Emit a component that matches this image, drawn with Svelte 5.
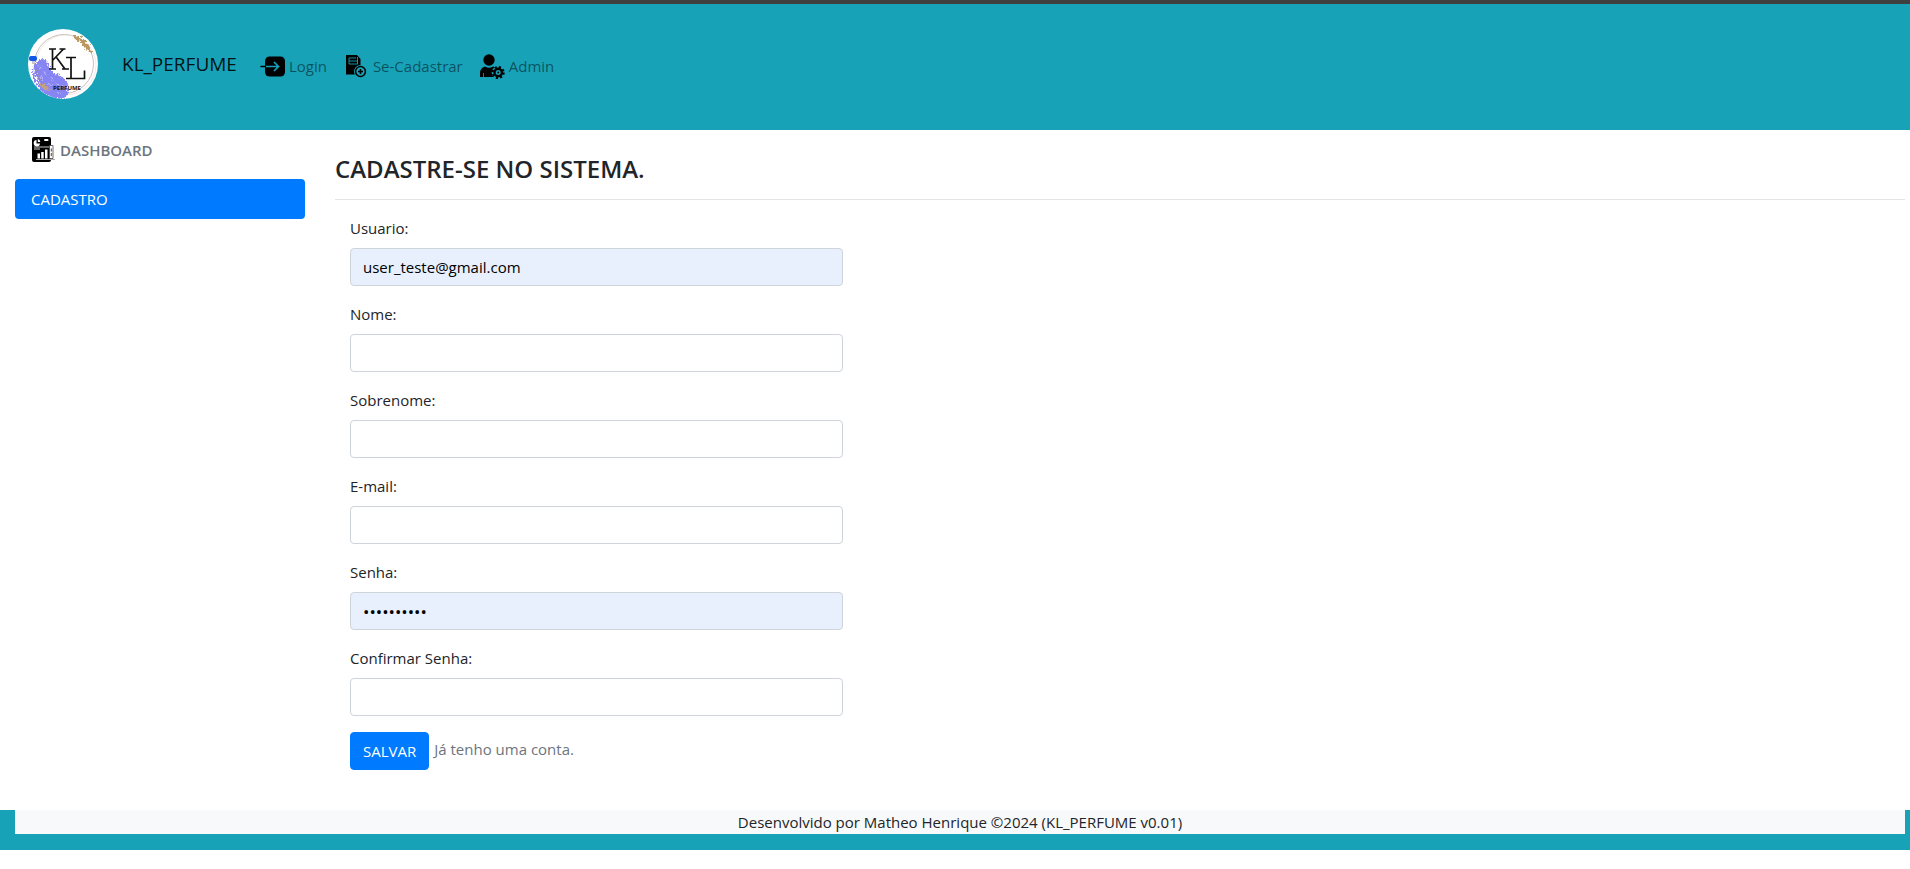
<script>
  let fields = $state([
    { id: 'usuario', label: 'Usuario:', type: 'text', value: 'user_teste@gmail.com', filled: true },
    { id: 'nome', label: 'Nome:', type: 'text', value: '', filled: false },
    { id: 'sobrenome', label: 'Sobrenome:', type: 'text', value: '', filled: false },
    { id: 'email', label: 'E-mail:', type: 'email', value: '', filled: false },
    { id: 'senha', label: 'Senha:', type: 'password', value: '1234567890', filled: true },
    { id: 'confirmar', label: 'Confirmar Senha:', type: 'password', value: '', filled: false }
  ]);
</script>

<div class="page">
  <header>
    <a class="brand" href="#home">
      <svg class="logo" viewBox="0 0 70 70" aria-hidden="true">
        <defs>
          <clipPath id="disc"><circle cx="35" cy="35" r="35" /></clipPath>
          <filter id="rough" x="-20%" y="-20%" width="140%" height="140%">
            <feTurbulence type="fractalNoise" baseFrequency="0.45" numOctaves="3" seed="4" />
            <feDisplacementMap in="SourceGraphic" scale="7" xChannelSelector="R" yChannelSelector="G" />
          </filter>
        </defs>
        <circle cx="35" cy="35" r="35" fill="#fff" />
        <g clip-path="url(#disc)">
          <circle cx="36" cy="35" r="29.500" fill="none" stroke="#c9bdb8" stroke-width="1" />
          <circle cx="38" cy="36" r="30" fill="none" stroke="#e3dcda" stroke-width="0.6" />
          <g filter="url(#rough)">
            <path d="M9 33 Q15 27 20 33 Q21 42 29 46 Q38 48 40 57 Q42 65 35 70 Q24 71 16 64 Q5 56 4 45 Q4 36 9 33Z" fill="#8785f3" />
            <path d="M11 37l3 2M16 42l2 3M22 49l4 2M28 54l3 3M20 55l3 1M12 47l2 3M30 64l3 1M36 56l1 3" stroke="#b5b4fa" stroke-width="1.500" />
            <path d="M5 40l2 4M7 47l2 3M9 52l1 3M4 50l3 5" stroke="#fff" stroke-width="2" />
            <path d="M8 40 Q10 46 12 52" fill="none" stroke="#9b86a4" stroke-width="1.500" stroke-dasharray="2 1" />
            <path d="M12 53 Q18 56 24 61 L20 62 Q15 60 11 56Z" fill="#c1a083" />
            <path d="M46 6 Q59 8 64 24 Q58 22 55 16 Q51 12 46 9Z" fill="#bd9760" />
          </g>
          <rect x="1" y="27" width="8" height="5" rx="2" fill="#1556e6" />
          <path d="M5 32v3" stroke="#8b87b8" stroke-width="1" />
        </g>
        <g fill="none" stroke="#111" stroke-width="1.7">
          <path d="M21 20h7M21 40h7M24.5 20v20M31.500 20h6M35.500 20L25 31M28.500 28.500L37 40M34 40h7" />
          <path d="M38 28.500h10M43 28.500v21M38 49.500h18.500v-8" />
        </g>
        <text x="25" y="61" class="logo-text">PERFUME</text>
      </svg>
      <span>KL_PERFUME</span>
    </a>
    <nav>
      <a href="#login">
        <svg class="icon" viewBox="0 0 25 25" aria-hidden="true">
          <rect x="5" y="2.500" width="20" height="20" rx="4.500" />
          <path d="M1 12.500h5" stroke="#000" stroke-width="1.500" stroke-linecap="round" />
          <path d="M6 12.500h12.500M14 8l4.500 4.500L14 17" fill="none" stroke="#17a2b8" stroke-width="1.700" />
        </svg>
        Login
      </a>
      <a href="#cadastrar">
        <svg class="icon" viewBox="0 0 25 25" aria-hidden="true">
          <path d="M2 1h11l3.500 4v15.500H2z" />
          <path d="M5 4h7M5 7h9M5 10h9M5 4v6M13.500 3v7" fill="none" stroke="#17a2b8" stroke-width=".9" />
          <circle cx="16.500" cy="17.500" r="6.500" fill="#17a2b8" />
          <circle cx="16.500" cy="17.500" r="4.900" fill="none" stroke="#000" stroke-width="1.500" />
          <path d="M16.500 15v5M14 17.500h5" stroke="#000" stroke-width="1.600" />
        </svg>
        Se-Cadastrar
      </a>
      <a href="#admin">
        <svg class="icon" viewBox="0 0 25 25" aria-hidden="true">
          <circle cx="9" cy="6" r="5.700" />
          <path d="M0 23v-4q0-5 5-6.500q4 2.500 8 0q3 .7 4 3v7.500z" />
          <path d="M3.500 19v4" stroke="#17a2b8" stroke-width=".8" />
          <circle cx="18.200" cy="18.500" r="6.500" fill="#17a2b8" />
          <circle cx="18.200" cy="18.500" r="3.700" fill="none" stroke="#000" stroke-width="2.400" />
          <circle cx="18.200" cy="18.500" r="5.500" fill="none" stroke="#000" stroke-width="2" stroke-dasharray="2.160 2.160" />
          <circle cx="18.200" cy="18.500" r="1" />
        </svg>
        Admin
      </a>
    </nav>
  </header>

  <div class="columns">
    <aside>
      <a class="dashboard" href="#dashboard">
        <svg class="icon" viewBox="0 0 25 25" aria-hidden="true">
          <rect x="1" y="0" width="19" height="25" rx="2" />
          <path d="M5.500 3v3.500h3.500a3.200 3.200 0 1 1-3.500-3.500z" fill="#fff" />
          <path d="M6.800 2a3 3 0 0 1 2.500 3H6.800z" fill="#fff" />
          <rect x="13" y="2" width="4.500" height="2" rx="1" fill="#fff" />
          <path d="M3 10h15M3 12h6" stroke="#fff" stroke-width=".8" />
          <path d="M6.500 21.500v-5h2.500v5zM10.200 21.500v-6.500h2.500v6.500zM14 21.500V12.500h2.500v9z" fill="#fff" />
          <path d="M18.500 21.500V8.500h3.500v13z" fill="#fff" stroke="#444" stroke-width=".8" />
          <path d="M20.300 11.500v3M20.300 16v3" stroke="#000" stroke-width=".7" />
          <path d="M5 22.500h19" stroke="#aaa" stroke-width="1" />
        </svg>
        DASHBOARD
      </a>
      <a class="active" href="#cadastro">CADASTRO</a>
    </aside>

    <main>
      <h1>CADASTRE-SE NO SISTEMA.</h1>
      <hr />
      <form onsubmit={(e) => e.preventDefault()}>
        {#each fields as field (field.id)}
          <div class="group">
            <label for={field.id}>{field.label}</label>
            <input id={field.id} type={field.type} class:filled={field.filled} autocomplete="off" bind:value={field.value} />
          </div>
        {/each}
        <div class="actions">
          <button type="submit">SALVAR</button>
          <a href="#login">Já tenho uma conta.</a>
        </div>
      </form>
    </main>
  </div>

  <footer>
    <p>Desenvolvido por Matheo Henrique ©2024 (KL_PERFUME v0.01)</p>
  </footer>
</div>

<style>
  :global(body) {
    margin: 0;
    background: #fff;
  }
  .page,
  .page * {
    box-sizing: border-box;
  }
  .page {
    font-family: 'Segoe UI', 'Open Sans', 'Noto Sans', sans-serif;
    font-size: 15px;
    line-height: 24px;
    color: #212529;
    border-top: 4px solid #3f3f3f;
  }
  a {
    text-decoration: none;
  }
  header {
    display: flex;
    align-items: center;
    background: #17a2b8;
    padding: 25px 28px 31px;
  }
  .brand {
    display: flex;
    align-items: center;
    gap: 24px;
    margin-right: 23px;
    font-size: 19px;
    line-height: 30px;
    color: rgba(0, 0, 0, 0.9);
  }
  .logo {
    width: 70px;
    height: 70px;
    display: block;
  }
  .logo-text {
    font-family: 'Open Sans', sans-serif;
    font-size: 6px;
    font-weight: 700;
    fill: #111;
  }
  nav {
    display: flex;
    gap: 17px;
    padding-top: 4px;
  }
  nav a {
    display: flex;
    align-items: center;
    gap: 4px;
    color: rgba(0, 0, 0, 0.5);
  }
  .icon {
    width: 25px;
    height: 25px;
    flex: none;
    fill: #000;
  }
  .columns {
    display: grid;
    grid-template-columns: calc((100% + 15px) / 6) minmax(0, 1fr);
    padding-right: 5px;
  }
  aside {
    display: flex;
    flex-direction: column;
    gap: 8px;
    padding: 0 15px;
  }
  aside a {
    display: flex;
    align-items: center;
    padding: 8px 16px;
    border-radius: 4px;
  }
  aside .dashboard {
    gap: 4px;
    padding: 7px 16px 9px;
    font-weight: 600;
    color: #6c757d;
  }
  aside .active {
    background: #007bff;
    color: #fff;
  }
  main {
    padding: 24px 0 40px 15px;
  }
  h1 {
    margin: 0;
    font-size: 24px;
    line-height: 29px;
    font-weight: 600;
  }
  hr {
    margin: 16px 0;
    border: 0;
    border-top: 1px solid rgba(0, 0, 0, 0.1);
  }
  form {
    width: 33.3333%;
    padding: 0 15px;
  }
  .group {
    display: flex;
    flex-direction: column;
    gap: 8px;
    margin-bottom: 16px;
  }
  input {
    width: 100%;
    height: 38px;
    padding: 6px 12px;
    border: 1px solid #ced4da;
    border-radius: 4px;
    background: #fff;
    font: inherit;
    color: #000;
  }
  input[type='password'] {
    font-size: 17px;
  }
  input.filled {
    background: #e8f0fe;
  }
  .actions {
    display: flex;
    gap: 5px;
    align-items: flex-start;
  }
  button {
    padding: 6px 12px;
    border: 1px solid #007bff;
    border-radius: 4px;
    background: #007bff;
    font: inherit;
    color: #fff;
  }
  .actions a {
    padding-top: 5px;
    color: #6c757d;
  }
  footer {
    background: #17a2b8;
    padding: 0 5px 16px 15px;
  }
  footer p {
    margin: 0;
    background: #f8f9fa;
    text-align: center;
  }
</style>
